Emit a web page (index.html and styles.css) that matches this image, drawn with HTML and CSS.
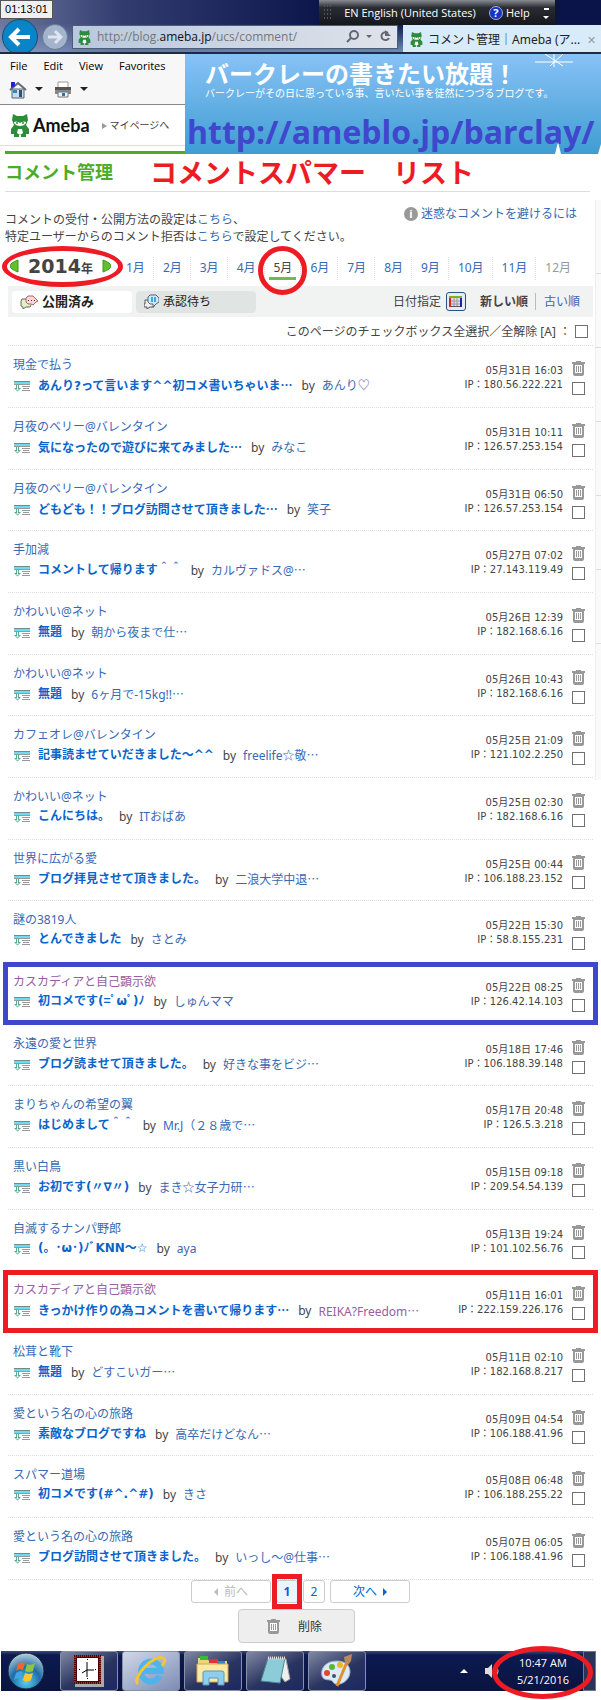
FILE: index.html
```
<!DOCTYPE html>
<html lang="ja">
<head>
    <meta charset="UTF-8">
    <meta name="viewport" content="width=device-width, initial-scale=1">
    <title>コメント管理 | Ameba</title>
    <link rel="stylesheet" href="styles.css">
</head>
<body>
    <svg class="sprite" aria-hidden="true">
        <symbol id="trash" viewBox="0 0 13 15">
            <path d="M4 0h5v1h4v2H0V1h4zM1 3h11v10q0 2-2 2H3q-2 0-2-2z" fill="#999"/>
            <path d="M3 4h7v8H3z" fill="#fff"/>
            <path d="M4 5h1v6H4zM6 5h1v6H6zM8 5h1v6H8z" fill="#999"/>
        </symbol>
        <symbol id="entry" viewBox="0 0 16 11">
            <path d="M0 0h16v1H0z" fill="#788"/>
            <path d="M0 1h16v2H0z" fill="#6cdcf5"/>
            <path d="M0 3h16v1H0zM8 5h8v1H8zM9 7h6v1H9zM8 9h8v1H8z" fill="#999"/>
            <path d="M2 4h3v3h2L3.500 10.500 0 7h2z" fill="#5fa898"/>
            <path d="M3 4h1v4h1L3.500 9.500 2 8h1z" fill="#e8fff8"/>
        </symbol>
        <symbol id="mascot" viewBox="0 0 20 25">
            <path d="M3 1l4 2h6l4-2 1 6-2 5 3 4v5h-3v3h-5v-2H9v2H4v-3H1v-5l3-4-2-5z" fill="#2d8c3c"/>
            <path d="M4 9q2-1 4 0l2 1 2-1q2-1 4 0v1q-2 3-6 3t-6-3z" fill="#fff"/>
            <circle cx="7" cy="10" r="1" fill="#2d8c3c"/><circle cx="13" cy="10" r="1" fill="#2d8c3c"/>
            <path d="M8 16h4l1 4-3 2-3-2z" fill="#fff"/>
        </symbol>
    </svg>

    <div class="titlebar">
        <span class="timer">01:13:01</span>
        <div class="langbar">
            <span class="grip"></span>
            <span>EN English (United States)</span>
            <span class="help"><b>?</b>Help</span>
            <svg width="6" height="14" viewBox="0 0 6 14"><path d="M1 2h5v2H1zM0 10h6l-3 3z" fill="#fff"/></svg>
        </div>
        <div class="nav">
            <button class="back" aria-label="Back"><svg width="24" height="22" viewBox="0 0 24 22"><path d="M11 3l-8 8 8 8M4 11h18" fill="none" stroke="#fff" stroke-width="4"/></svg></button>
            <button class="forward" aria-label="Forward"><svg width="16" height="16" viewBox="0 0 16 16"><path d="M8 2l6 6-6 6M1 8h12" fill="none" stroke="#dde6f0" stroke-width="3"/></svg></button>
            <div class="address">
                <svg width="13" height="17"><use href="#mascot"/></svg>
                <span class="url">http://blog.<b>ameba.jp</b>/ucs/comment/</span>
                <svg width="46" height="16" viewBox="0 0 46 16"><g fill="none" stroke="#667" stroke-width="2"><circle cx="8" cy="6" r="4"/><path d="M5 9l-4 4"/><path d="M42 4a4 4 0 1 0 1 5"/></g><path d="M20 6h6l-3 3zM39 1v6h6z" fill="#667"/></svg>
            </div>
            <div class="tab">
                <svg width="13" height="17"><use href="#mascot"/></svg>
                <span>コメント管理｜Ameba (ア...</span>
                <button class="close" aria-label="Close tab">✕</button>
            </div>
        </div>
    </div>

    <div class="top">
        <div class="top-left">
            <nav class="menu">
                <a href="#">File</a>
                <a href="#">Edit</a>
                <a href="#">View</a>
                <a href="#">Favorites</a>
            </nav>
            <div class="toolbar">
                <button aria-label="Home">
                    <svg width="34" height="18" viewBox="0 0 34 18"><path d="M3 8h12v9H3z" fill="#cfd8e8" stroke="#567"/><path d="M1 9l8-7 8 7" fill="none" stroke="#667" stroke-width="2"/><path d="M2 1h4v4L2 7z" fill="#22c"/><path d="M4 9h4v3H4z" fill="#38b"/><path d="M10 9h3v7h-3z" fill="#258"/><path d="M26 6h8l-4 4z" fill="#222"/></svg>
                </button>
                <button aria-label="Print">
                    <svg width="34" height="18" viewBox="0 0 34 18"><path d="M4 1h10v6H4z" fill="#fff" stroke="#999"/><path d="M1 6h16v7H1z" fill="#888"/><path d="M1 6h16v3H1z" fill="#555"/><path d="M4 11h10v5H4z" fill="#e8f4f8" stroke="#777"/><path d="M8 12h3v3H8z" fill="#27b"/><path d="M26 6h8l-4 4z" fill="#222"/></svg>
                </button>
            </div>
            <div class="brand">
                <svg width="20" height="25"><use href="#mascot"/></svg>
                <span class="logo">Ameba</span>
                <a href="#" class="mypage">マイページへ</a>
            </div>
            <div class="green-line"></div>
        </div>
        <div class="banner">
            <svg class="spark" width="38" height="16" viewBox="0 0 38 16"><path d="M0 8h38M19 0v13M10 0l18 12M28 0L15 12" stroke="#fff" fill="none"/></svg>
            <svg class="peaks" width="46" height="16" viewBox="0 0 46 16"><path d="M0 16L3 4l3 12zM43 16l3-10v10z" fill="#fff"/></svg>
            <h2>バークレーの書きたい放題！</h2>
            <p>バークレーがその日に思っている事、言いたい事を徒然につづるブログです。</p>
            <div class="blog-url">http://ameblo.jp/barclay/</div>
        </div>
    </div>

    <div class="page">
        <main>
            <header class="heading">
                <h1>コメント管理</h1>
                <strong>コメントスパマー　リスト</strong>
            </header>

            <div class="notes">
                <p>コメントの受付・公開方法の設定は<a href="#">こちら</a>、<br>特定ユーザーからのコメント拒否は<a href="#">こちら</a>で設定してください。</p>
                <a href="#" class="avoid"><i>i</i>迷惑なコメントを避けるには</a>
            </div>

            <div class="calendar">
                <div class="year">
                    <button class="arrow" aria-label="前の年"><svg width="9" height="14" viewBox="0 0 9 14"><path d="M8 1v12q-8-3-8-6t8-6z" fill="#62c02c" stroke="#3c9a1c"/></svg></button>
                    <span><b>2014</b>年</span>
                    <button class="arrow" aria-label="次の年"><svg width="9" height="14" viewBox="0 0 9 14"><path d="M1 1v12q8-3 8-6t-8-6z" fill="#62c02c" stroke="#3c9a1c"/></svg></button>
                    <span class="ring"></span>
                </div>
                <ul class="months">
                    <li><a href="#">1月</a></li>
                    <li><a href="#">2月</a></li>
                    <li><a href="#">3月</a></li>
                    <li><a href="#">4月</a></li>
                    <li class="current"><span>5月</span><span class="ring"></span></li>
                    <li><a href="#">6月</a></li>
                    <li><a href="#">7月</a></li>
                    <li><a href="#">8月</a></li>
                    <li><a href="#">9月</a></li>
                    <li><a href="#">10月</a></li>
                    <li><a href="#">11月</a></li>
                    <li class="off">12月</li>
                </ul>
            </div>

            <div class="filter">
                <button class="state active">
                    <svg width="18" height="14" viewBox="0 0 18 14"><path d="M6 4H2L1 6v5l2 1v2l3-2h4l1-2" fill="#e2f0c4" stroke="#666"/><path d="M8 1h5l3 3 2 2-2 1-3 3-2-1H8L6 7V3z" fill="#fbd5da" stroke="#a66"/><path d="M8 5h1v1H8zM11 5h1v1h-1zM14 5h1v1h-1z" fill="#533"/></svg>
                    公開済み
                </button>
                <button class="state">
                    <svg width="15" height="15" viewBox="0 0 15 15"><path d="M5 6H1v4H0v3h3v2l3-2h4v-3" fill="#eee" stroke="#555"/><path d="M6 1h6l3 3v4l-3 2-3 3v-3H6L4 8V3z" fill="#cde9f8" stroke="#567"/><path d="M7 3h2v5H7zM10 3h2v5h-2z" fill="#47a3d8"/></svg>
                    承認待ち
                </button>
                <span class="date-pick">日付指定</span>
                <button class="cal" aria-label="日付指定"><svg width="13" height="11" viewBox="0 0 13 11"><path d="M0 0h13v11H0z" fill="#555"/><path d="M0 0h13v2H0z" fill="#7ab51d"/><path d="M0 2h2v9H0z" fill="#d22"/><path d="M11 2h2v9h-2z" fill="#22a"/><path d="M2 2h9v8H2z" fill="#ddd"/><path d="M5 2v8M8 2v8M2 5h9M2 8h9" stroke="#999"/></svg></button>
                <strong>新しい順</strong>
                <a href="#">古い順</a>
            </div>

            <div class="all">
                <label for="all">このページのチェックボックス全選択／全解除 [A] ：</label>
                <input type="checkbox" id="all">
            </div>

            <ul class="comments">
                <li>
                    <div class="entry"><a href="#">現金で払う</a><p><svg><use href="#entry"/></svg><a href="#" class="title">あんり?って言います^^初コメ書いちゃいま<i>…</i></a>by<a href="#">あんり♡</a></p></div>
                    <div class="meta">05月31日 16:03<br>IP：180.56.222.221</div>
                    <div class="tools"><button aria-label="削除"><svg><use href="#trash"/></svg></button><input type="checkbox" aria-label="選択"></div>
                </li>
                <li>
                    <div class="entry"><a href="#">月夜のベリー@バレンタイン</a><p><svg><use href="#entry"/></svg><a href="#" class="title">気になったので遊びに来てみました<i>…</i></a>by<a href="#">みなこ</a></p></div>
                    <div class="meta">05月31日 10:11<br>IP：126.57.253.154</div>
                    <div class="tools"><button aria-label="削除"><svg><use href="#trash"/></svg></button><input type="checkbox" aria-label="選択"></div>
                </li>
                <li>
                    <div class="entry"><a href="#">月夜のベリー@バレンタイン</a><p><svg><use href="#entry"/></svg><a href="#" class="title">どもども！！ブログ訪問させて頂きました<i>…</i></a>by<a href="#">笑子</a></p></div>
                    <div class="meta">05月31日 06:50<br>IP：126.57.253.154</div>
                    <div class="tools"><button aria-label="削除"><svg><use href="#trash"/></svg></button><input type="checkbox" aria-label="選択"></div>
                </li>
                <li>
                    <div class="entry"><a href="#">手加減</a><p><svg><use href="#entry"/></svg><a href="#" class="title">コメントして帰ります＾＾</a>by<a href="#">カルヴァドス@<i>…</i></a></p></div>
                    <div class="meta">05月27日 07:02<br>IP：27.143.119.49</div>
                    <div class="tools"><button aria-label="削除"><svg><use href="#trash"/></svg></button><input type="checkbox" aria-label="選択"></div>
                </li>
                <li>
                    <div class="entry"><a href="#">かわいい@ネット</a><p><svg><use href="#entry"/></svg><a href="#" class="title">無題</a>by<a href="#">朝から夜まで仕<i>…</i></a></p></div>
                    <div class="meta">05月26日 12:39<br>IP：182.168.6.16</div>
                    <div class="tools"><button aria-label="削除"><svg><use href="#trash"/></svg></button><input type="checkbox" aria-label="選択"></div>
                </li>
                <li>
                    <div class="entry"><a href="#">かわいい@ネット</a><p><svg><use href="#entry"/></svg><a href="#" class="title">無題</a>by<a href="#">6ヶ月で-15kg!!<i>…</i></a></p></div>
                    <div class="meta">05月26日 10:43<br>IP：182.168.6.16</div>
                    <div class="tools"><button aria-label="削除"><svg><use href="#trash"/></svg></button><input type="checkbox" aria-label="選択"></div>
                </li>
                <li>
                    <div class="entry"><a href="#">カフェオレ@バレンタイン</a><p><svg><use href="#entry"/></svg><a href="#" class="title">記事読ませていだきました～^^</a>by<a href="#">freelife☆敬<i>…</i></a></p></div>
                    <div class="meta">05月25日 21:09<br>IP：121.102.2.250</div>
                    <div class="tools"><button aria-label="削除"><svg><use href="#trash"/></svg></button><input type="checkbox" aria-label="選択"></div>
                </li>
                <li>
                    <div class="entry"><a href="#">かわいい@ネット</a><p><svg><use href="#entry"/></svg><a href="#" class="title">こんにちは。</a>by<a href="#">ITおばあ</a></p></div>
                    <div class="meta">05月25日 02:30<br>IP：182.168.6.16</div>
                    <div class="tools"><button aria-label="削除"><svg><use href="#trash"/></svg></button><input type="checkbox" aria-label="選択"></div>
                </li>
                <li>
                    <div class="entry"><a href="#">世界に広がる愛</a><p><svg><use href="#entry"/></svg><a href="#" class="title">ブログ拝見させて頂きました。</a>by<a href="#">二浪大学中退<i>…</i></a></p></div>
                    <div class="meta">05月25日 00:44<br>IP：106.188.23.152</div>
                    <div class="tools"><button aria-label="削除"><svg><use href="#trash"/></svg></button><input type="checkbox" aria-label="選択"></div>
                </li>
                <li>
                    <div class="entry"><a href="#">謎の3819人</a><p><svg><use href="#entry"/></svg><a href="#" class="title">とんできました</a>by<a href="#">さとみ</a></p></div>
                    <div class="meta">05月22日 15:30<br>IP：58.8.155.231</div>
                    <div class="tools"><button aria-label="削除"><svg><use href="#trash"/></svg></button><input type="checkbox" aria-label="選択"></div>
                </li>
                <li class="marked blue">
                    <div class="entry"><a href="#" class="visited">カスカディアと自己顕示欲</a><p><svg><use href="#entry"/></svg><a href="#" class="title">初コメです(=ﾟωﾟ)ﾉ</a>by<a href="#">しゅんママ</a></p></div>
                    <div class="meta">05月22日 08:25<br>IP：126.42.14.103</div>
                    <div class="tools"><button aria-label="削除"><svg><use href="#trash"/></svg></button><input type="checkbox" aria-label="選択"></div>
                </li>
                <li>
                    <div class="entry"><a href="#">永遠の愛と世界</a><p><svg><use href="#entry"/></svg><a href="#" class="title">ブログ読ませて頂きました。</a>by<a href="#">好きな事をビジ<i>…</i></a></p></div>
                    <div class="meta">05月18日 17:46<br>IP：106.188.39.148</div>
                    <div class="tools"><button aria-label="削除"><svg><use href="#trash"/></svg></button><input type="checkbox" aria-label="選択"></div>
                </li>
                <li>
                    <div class="entry"><a href="#">まりちゃんの希望の翼</a><p><svg><use href="#entry"/></svg><a href="#" class="title">はじめまして＾＾</a>by<a href="#">Mr.J（２８歳で<i>…</i></a></p></div>
                    <div class="meta">05月17日 20:48<br>IP：126.5.3.218</div>
                    <div class="tools"><button aria-label="削除"><svg><use href="#trash"/></svg></button><input type="checkbox" aria-label="選択"></div>
                </li>
                <li>
                    <div class="entry"><a href="#">黒い白鳥</a><p><svg><use href="#entry"/></svg><a href="#" class="title">お初です(〃∇〃)</a>by<a href="#">まき☆女子力研<i>…</i></a></p></div>
                    <div class="meta">05月15日 09:18<br>IP：209.54.54.139</div>
                    <div class="tools"><button aria-label="削除"><svg><use href="#trash"/></svg></button><input type="checkbox" aria-label="選択"></div>
                </li>
                <li>
                    <div class="entry"><a href="#">自滅するナンパ野郎</a><p><svg><use href="#entry"/></svg><a href="#" class="title">(。･ω･)ﾉﾞKNN～☆</a>by<a href="#">aya</a></p></div>
                    <div class="meta">05月13日 19:24<br>IP：101.102.56.76</div>
                    <div class="tools"><button aria-label="削除"><svg><use href="#trash"/></svg></button><input type="checkbox" aria-label="選択"></div>
                </li>
                <li class="marked red">
                    <div class="entry"><a href="#" class="visited">カスカディアと自己顕示欲</a><p><svg><use href="#entry"/></svg><a href="#" class="title">きっかけ作りの為コメントを書いて帰ります<i>…</i></a>by<a href="#" class="visited">REIKA?Freedom<i>…</i></a></p></div>
                    <div class="meta">05月11日 16:01<br>IP：222.159.226.176</div>
                    <div class="tools"><button aria-label="削除"><svg><use href="#trash"/></svg></button><input type="checkbox" aria-label="選択"></div>
                </li>
                <li>
                    <div class="entry"><a href="#">松茸と靴下</a><p><svg><use href="#entry"/></svg><a href="#" class="title">無題</a>by<a href="#">どすこいガー<i>…</i></a></p></div>
                    <div class="meta">05月11日 02:10<br>IP：182.168.8.217</div>
                    <div class="tools"><button aria-label="削除"><svg><use href="#trash"/></svg></button><input type="checkbox" aria-label="選択"></div>
                </li>
                <li>
                    <div class="entry"><a href="#">愛という名の心の旅路</a><p><svg><use href="#entry"/></svg><a href="#" class="title">素敵なブログですね</a>by<a href="#">高卒だけどなん<i>…</i></a></p></div>
                    <div class="meta">05月09日 04:54<br>IP：106.188.41.96</div>
                    <div class="tools"><button aria-label="削除"><svg><use href="#trash"/></svg></button><input type="checkbox" aria-label="選択"></div>
                </li>
                <li>
                    <div class="entry"><a href="#">スパマー道場</a><p><svg><use href="#entry"/></svg><a href="#" class="title">初コメです(#^.^#)</a>by<a href="#">きさ</a></p></div>
                    <div class="meta">05月08日 06:48<br>IP：106.188.255.22</div>
                    <div class="tools"><button aria-label="削除"><svg><use href="#trash"/></svg></button><input type="checkbox" aria-label="選択"></div>
                </li>
                <li>
                    <div class="entry"><a href="#">愛という名の心の旅路</a><p><svg><use href="#entry"/></svg><a href="#" class="title">ブログ訪問させて頂きました。</a>by<a href="#">いっし～@仕事<i>…</i></a></p></div>
                    <div class="meta">05月07日 06:05<br>IP：106.188.41.96</div>
                    <div class="tools"><button aria-label="削除"><svg><use href="#trash"/></svg></button><input type="checkbox" aria-label="選択"></div>
                </li>
            </ul>

            <div class="pager">
                <button class="step" disabled><svg width="4" height="8" viewBox="0 0 4 8"><path d="M4 0v8L0 4z" fill="#bbb"/></svg>前へ</button>
                <button class="num on">1</button>
                <button class="num">2</button>
                <button class="step">次へ<svg width="4" height="8" viewBox="0 0 4 8"><path d="M0 0v8l4-4z" fill="#06c"/></svg></button>
            </div>
            <div class="actions">
                <button class="delete"><svg width="13" height="15"><use href="#trash"/></svg>削除</button>
            </div>
        </main>

        <aside class="side">
            <div></div><div></div><div></div><div></div><div></div><div></div>
        </aside>
    </div>

    <footer class="taskbar">
        <button class="start" aria-label="Start">
            <svg width="38" height="38" viewBox="0 0 38 38"><defs><radialGradient id="orb" cx=".5" cy=".8" r=".8"><stop offset="0" stop-color="#5fd0f0"/><stop offset=".5" stop-color="#1d6ca8"/><stop offset="1" stop-color="#bcd0dc"/></radialGradient></defs><circle cx="19" cy="19" r="18" fill="url(#orb)" stroke="#123"/><path d="M11 12q4-3 7-1l-2 7q-4-2-7 1z" fill="#f0652a"/><path d="M20 12q4 2 8-1l-2 8q-4 2-8 0z" fill="#8cc63e"/><path d="M9 21q4-3 7-1l-2 7q-4-2-7 1z" fill="#41a5e0"/><path d="M18 21q4 2 8 0l-2 7q-4 3-8 0z" fill="#fdc82f"/></svg>
        </button>
        <button class="app" aria-label="Clock">
            <svg width="30" height="32" viewBox="0 0 30 32"><path d="M1 1h29v31H1z" fill="#aaa"/><path d="M0 0h27v29H0z" fill="#500"/><path d="M1 1h25v27H1z" fill="none" stroke="#e11" stroke-width="2" stroke-dasharray="1 1"/><path d="M3 3h21v23H3z" fill="#fff"/><path d="M13 7v15M13 15h7M13 15l-5 3" stroke="#000" fill="none"/><path d="M5 14h1v1H5zM21 14h1v1h-1zM13 4h1v1h-1zM13 23h1v1h-1z"/></svg>
        </button>
        <button class="app active" aria-label="Internet Explorer">
            <svg width="34" height="34" viewBox="0 0 34 34"><path d="M26 22A10 10 0 1 1 27 17H10" fill="none" stroke="#4fb4ea" stroke-width="6"/><path d="M4 30C-3 24 20 0 29 4q4 2-1 8" fill="none" stroke="#f6c534" stroke-width="3"/></svg>
        </button>
        <button class="app" aria-label="Explorer">
            <svg width="36" height="32" viewBox="0 0 36 32"><path d="M3 3h9l2 3h18v20H3z" fill="#efd37a"/><path d="M5 1h8v4H5z" fill="#3b3"/><path d="M14 4h9v4h-9z" fill="#d33"/><path d="M22 6h8v3h-8z" fill="#38c"/><path d="M2 9h31v18H2z" fill="#fbe9a5" stroke="#d2aa4a"/><path d="M8 30V18q0-2 2-2h17q2 0 2 2v12h-6v-7h-9v7z" fill="#8fcdec" stroke="#5599c4"/></svg>
        </button>
        <button class="app" aria-label="Notepad">
            <svg width="32" height="32" viewBox="0 0 32 32"><path d="M9 3l18 1 4 20-5 3z" fill="#eee" stroke="#999"/><path d="M9 3h17l-5 25-19-2z" fill="#8ccbd8" stroke="#4a8a98"/><path d="M9 3h18" stroke="#ddd" stroke-width="3" stroke-dasharray="1 1"/></svg>
        </button>
        <button class="app" aria-label="Paint">
            <svg width="34" height="34" viewBox="0 0 34 34"><path d="M17 7C5 7 0 15 2 22c2 6 9 2 11 6 3 6 17 0 17-10 0-7-5-11-13-11z" fill="#dcebf6" stroke="#8fb0cc"/><circle cx="7" cy="19" r="3" fill="#e2452c"/><circle cx="12" cy="13" r="3" fill="#5cb53a"/><circle cx="20" cy="11" r="3" fill="#f2b52c"/><circle cx="14" cy="22" r="2" fill="#357"/><path d="M27 8L17 32" stroke="#e09030" stroke-width="3"/><path d="M25 9l-1-6 8-3-1 7-3 4z" fill="#b98a60"/></svg>
        </button>
        <div class="tray">
            <svg width="8" height="4" viewBox="0 0 8 4"><path d="M4 0l4 4H0z" fill="#fff"/></svg>
            <svg width="15" height="14" viewBox="0 0 15 14"><path d="M0 4h3l4-4v14l-4-4H0z" fill="#ddd"/><path d="M9 4q2 3 0 6M11 2q4 5 0 10" fill="none" stroke="#ddd"/></svg>
            <div class="clock">10:47 AM<br>5/21/2016<span class="ring"></span></div>
        </div>
        <button class="desktop" aria-label="Show desktop"></button>
    </footer>
</body>
</html>
```
FILE: styles.css
```
* {
    box-sizing: border-box;
}

body {
    margin: 0;
    background: #fff;
    color: #444;
    font-family: "Noto Sans", "Noto Sans CJK JP", sans-serif;
    font-size: 12px;
    line-height: 17px;
}

h1, h2, p, ul {
    margin: 0;
    padding: 0;
}

ul {
    list-style: none;
}

a {
    color: #3769b5;
    text-decoration: none;
}

button {
    font: inherit;
    color: inherit;
    padding: 0;
    border: 0;
    background: none;
    cursor: pointer;
}

svg {
    flex: none;
}

input[type="checkbox"] {
    appearance: none;
    width: 13px;
    height: 13px;
    margin: 0;
    border: 1px solid #707070;
    background: #fff;
}

.sprite {
    position: absolute;
    width: 0;
    height: 0;
}

/* hand-drawn red marks */
.ring {
    position: absolute;
    border: 5px solid #ed1c24;
    border-radius: 50%;
    pointer-events: none;
}

/* browser chrome */
.titlebar {
    position: relative;
    height: 54px;
    padding-top: 19px;
    overflow: hidden;
    background: linear-gradient(90deg, rgba(150, 160, 195, 0.7), rgba(90, 100, 150, 0.5) 20%, transparent 55%), linear-gradient(#0a1448 45%, #6c8cb8);
    border-bottom: 2px solid #1c2a44;
}

.timer {
    position: absolute;
    left: 0;
    top: 0;
    width: 53px;
    height: 19px;
    background: #f0f0f0;
    border: 1px solid #555;
    color: #000;
    font: 11px/16px "Liberation Sans", sans-serif;
    text-align: center;
}

.langbar {
    position: absolute;
    right: 46px;
    top: 0;
    width: 236px;
    height: 25px;
    padding: 0 6px 0 4px;
    display: flex;
    align-items: center;
    justify-content: space-between;
    background: linear-gradient(#8a8c94, #2a2c34 30%, #15171d);
    color: #fff;
    font: 11px/16px "Open Sans", sans-serif;
}

.grip {
    width: 8px;
    height: 17px;
    background: radial-gradient(#555 1px, transparent 1px) 0 0 / 3px 4px;
}

.help b {
    display: inline-block;
    width: 14px;
    height: 14px;
    margin-right: 3px;
    border: 1px solid #aac;
    border-radius: 50%;
    background: #1434c8;
    line-height: 12px;
    text-align: center;
}

.nav {
    display: flex;
    align-items: flex-start;
}

.back {
    width: 36px;
    height: 36px;
    margin-left: 2px;
    border: 1px solid #1c4a70;
    border-radius: 50%;
    background: #0a84c8;
}

.back svg,
.forward svg {
    display: block;
    margin: auto;
}

.forward {
    width: 26px;
    height: 26px;
    margin: 5px 4px 0;
    border: 1px solid #6a7a94;
    border-radius: 50%;
    background: #a4b4cc;
}

.address {
    flex: 1;
    height: 24px;
    margin: 6px 5px 0 0;
    padding: 0 5px;
    display: flex;
    align-items: center;
    gap: 6px;
    border: 1px solid #4c5c78;
    background: linear-gradient(90deg, #b8c8de, #dfe3ea);
}

.url {
    flex: 1;
    color: #777;
    font: 12px/20px "Open Sans", sans-serif;
}

.url b {
    color: #111;
    font-weight: normal;
}

.tab {
    width: 198px;
    height: 28px;
    margin-top: 6px;
    padding: 0 5px 0 7px;
    display: flex;
    align-items: center;
    gap: 5px;
    background: #d8ebfb;
    color: #222;
    white-space: nowrap;
}

.tab span {
    flex: 1;
}

.close {
    color: #999;
    font-size: 11px;
}

.top {
    display: flex;
    height: 100px;
}

.top-left {
    width: 185px;
}

.menu {
    height: 23px;
    padding-left: 10px;
    display: flex;
    align-items: center;
    gap: 16px;
    background: #f7f7f7;
    font: 11px/16px "Open Sans", sans-serif;
}

.menu a {
    color: #000;
}

.toolbar {
    height: 28px;
    padding: 4px 9px 0;
    display: flex;
    gap: 11px;
    background: #f7f7f7;
    border-bottom: 1px solid #888;
}

.toolbar button {
    height: 18px;
}

.brand {
    height: 41px;
    padding-left: 10px;
    display: flex;
    align-items: center;
    gap: 3px;
    border-bottom: 1px solid #ddd;
}

.logo {
    color: #111;
    font: bold 18px/24px "Lato", sans-serif;
}

.mypage {
    margin-left: 9px;
    color: #444;
    font-size: 10px;
    white-space: nowrap;
}

.mypage::before {
    content: "";
    display: inline-block;
    margin-right: 3px;
    border: 3px solid transparent;
    border-left: 5px solid #999;
    border-right: 0;
}

.green-line {
    height: 3px;
    margin: 5px 0 0 5px;
    background: #4cac28;
}

.banner {
    position: relative;
    flex: 1;
    min-width: 0;
    padding: 8px 0 0 2px;
    overflow: hidden;
    background: linear-gradient(#88c2f6, #3f9dd2);
    color: #fff;
    white-space: nowrap;
}

.banner h2 {
    margin-left: 18px;
    font-size: 24px;
    line-height: 24px;
}

.banner p {
    margin-left: 18px;
    font-size: 10px;
    line-height: 14px;
}

.blog-url {
    margin-top: 12px;
    color: #3f48cc;
    font: bold 32px/40px "Open Sans", sans-serif;
}

.spark {
    position: absolute;
    right: 28px;
    top: 0;
}

.peaks {
    position: absolute;
    right: 0;
    bottom: 0;
}

/* comment manager */
.page {
    display: flex;
}

main {
    flex: 1;
    min-width: 0;
    padding: 0 2px 0 8px;
}

.side {
    width: 6px;
    height: 580px;
    margin-top: 46px;
    background: #fafafa;
    border-left: 1px solid #eee;
}

.side div {
    height: 74px;
    border-bottom: 1px solid #ddd;
}

.heading {
    height: 38px;
    margin: 0 3px 0 -3px;
    display: flex;
    align-items: center;
    gap: 37px;
    border-bottom: 1px solid #ddd;
    white-space: nowrap;
}

.heading h1 {
    color: #4cac28;
    font-size: 18px;
}

.heading strong {
    color: #ed1c24;
    font-size: 27px;
}

.notes {
    height: 60px;
    margin: 0 16px 0 -3px;
    padding-top: 19px;
    display: flex;
    justify-content: space-between;
    align-items: flex-start;
    white-space: nowrap;
}

.avoid {
    margin-top: -6px;
}

.notes i {
    display: inline-block;
    width: 14px;
    height: 14px;
    margin-right: 3px;
    border-radius: 50%;
    background: #999;
    color: #fff;
    font: bold 11px/14px "Open Sans", sans-serif;
    text-align: center;
}

.calendar {
    height: 34px;
    display: flex;
    align-items: flex-start;
}

.year {
    position: relative;
    width: 109px;
    height: 28px;
    padding: 0 6px 0 2px;
    display: flex;
    align-items: center;
    justify-content: space-between;
    white-space: nowrap;
}

.year b {
    font: bold 19px/24px "DejaVu Sans", sans-serif;
}

.year span {
    font-weight: bold;
}

.year .ring {
    left: -6px;
    top: -6px;
    width: 121px;
    height: 41px;
}

.arrow {
    height: 14px;
    display: flex;
}

.months {
    flex: 1;
    display: flex;
    padding-top: 5px;
}

.months li {
    height: 23px;
    padding: 0 8px 0 9px;
    border-right: 1px dotted #ddd;
    line-height: 21px;
}

.months li:last-child {
    border: 0;
}

.months .off {
    color: #999;
}

.months .current {
    position: relative;
}

.current::after {
    content: "";
    position: absolute;
    left: 4px;
    right: 4px;
    bottom: 0;
    height: 3px;
    background: #6abf4b;
}

.current .ring {
    left: -7px;
    top: -11px;
    width: 49px;
    height: 49px;
}

.filter {
    height: 31px;
    padding: 0 13px 0 4px;
    display: flex;
    align-items: center;
    background: #f1f3f3;
    white-space: nowrap;
}

.state {
    width: 120px;
    height: 22px;
    margin-right: 4px;
    padding-left: 8px;
    display: flex;
    align-items: center;
    gap: 4px;
    border-radius: 4px;
    background: #e0e5e4;
    color: #222;
}

.state.active {
    background: #fff;
    font-size: 13px;
    font-weight: bold;
}

.date-pick {
    margin-left: auto;
}

.cal {
    width: 20px;
    height: 19px;
    margin: 0 14px 0 5px;
    display: flex;
    align-items: center;
    justify-content: center;
    border: 1px solid #2a5082;
    border-radius: 3px;
    background: #e6ecf6;
}

.filter a {
    margin-left: 7px;
    padding-left: 8px;
    border-left: 1px solid #bbb;
}

.all {
    height: 29px;
    padding-right: 5px;
    display: flex;
    justify-content: flex-end;
    align-items: center;
    gap: 4px;
    border-bottom: 1px dotted #ddd;
    white-space: nowrap;
}

.comments li {
    position: relative;
    height: 62px;
    padding: 10px 8px 0 5px;
    display: flex;
    border-bottom: 1px dotted #ddd;
    white-space: nowrap;
}

.comments li:nth-child(3n) {
    height: 61px;
}

.comments i {
    font-family: "Noto Sans CJK JP", sans-serif;
    font-style: normal;
}

.entry {
    flex: 1;
    min-width: 0;
}

.entry p {
    margin-top: 3px;
    display: flex;
    align-items: center;
}

.entry svg {
    width: 16px;
    height: 11px;
    margin: 2px 8px 0 1px;
}

.entry .title {
    margin-right: 9px;
    color: #0a64cc;
    font-family: "DejaVu Sans", "Noto Sans CJK JP", sans-serif;
    font-weight: bold;
}

.entry p a:last-child {
    margin-left: 7px;
}

.entry .visited {
    color: #96609c;
}

.meta {
    padding-top: 8px;
    font: 10px/14px "DejaVu Sans", "Noto Sans CJK JP", sans-serif;
    text-align: right;
}

.tools {
    width: 13px;
    margin-left: 9px;
    padding-top: 5px;
    display: flex;
    flex-direction: column;
    gap: 6px;
}

.tools button {
    height: 15px;
}

.tools svg {
    display: block;
    width: 13px;
    height: 15px;
}

.marked::before {
    content: "";
    position: absolute;
    inset: -1px -5px -1px -5px;
    border: 5px solid #3f48cc;
    pointer-events: none;
}

.marked.red::before {
    border-color: #ed1c24;
}

.pager {
    display: flex;
    justify-content: center;
    gap: 5px;
    color: #0a64cc;
}

.pager button {
    height: 23px;
    border: 1px solid #ccc;
    border-radius: 3px;
    background: #fff;
}

.pager .step {
    width: 80px;
    display: flex;
    align-items: center;
    justify-content: center;
    gap: 6px;
}

.pager .step:disabled {
    color: #bbb;
}

.pager .num {
    width: 22px;
}

.pager .on {
    position: relative;
    background: #ecf5fd;
    font-weight: bold;
}

.pager .on::after {
    content: "";
    position: absolute;
    inset: -7px -5px;
    border: 5px solid #ed1c24;
}

.actions {
    padding: 6px 8px 0 0;
    display: flex;
    justify-content: center;
}

.delete {
    width: 117px;
    height: 34px;
    padding-right: 4px;
    display: flex;
    align-items: center;
    justify-content: center;
    gap: 18px;
    border: 1px solid #ccc;
    border-radius: 4px;
    background: #eee;
    color: #333;
}

.taskbar {
    height: 40px;
    margin: 8px 5px 10px 1px;
    display: flex;
    align-items: stretch;
    gap: 4px;
    background: linear-gradient(#3c4c70, #0c1a50 10%, #0a1440);
}

.start {
    width: 50px;
    margin-right: 5px;
}

.app {
    width: 58px;
    border: 1px solid #8890a8;
    border-radius: 3px;
    background: linear-gradient(150deg, #8088a4, #2a3460 55%, #1c2860);
}

.app.active {
    background: linear-gradient(150deg, #d0d8e8, #7c8cb4);
}

.app svg,
.start svg {
    display: block;
    margin: auto;
}

.tray {
    flex: 1;
    padding-right: 10px;
    display: flex;
    align-items: center;
    justify-content: flex-end;
    gap: 17px;
    color: #fff;
    font: 11px/17px "Open Sans", sans-serif;
    text-align: center;
    white-space: nowrap;
}

.clock {
    position: relative;
}

.clock .ring {
    left: -25px;
    top: -8px;
    width: 101px;
    height: 53px;
}

.desktop {
    width: 13px;
    border: 1px solid #68789a;
    background: #2a3458;
}
```
